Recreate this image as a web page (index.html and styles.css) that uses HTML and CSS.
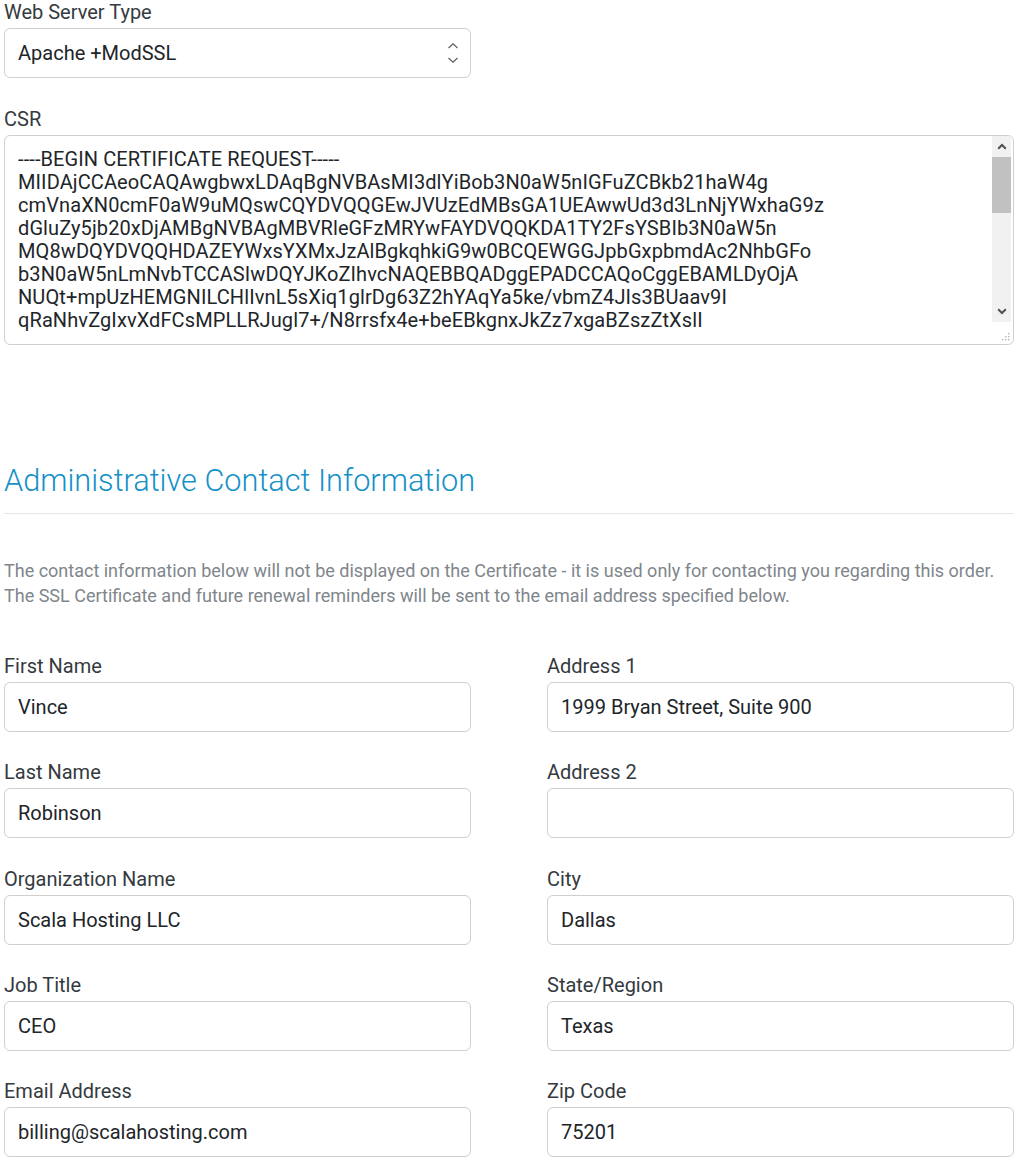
FILE: index.html
```html
<!DOCTYPE html>
<html lang="en">
<head>
  <meta charset="UTF-8">
  <meta name="viewport" content="width=device-width, initial-scale=1.0">
  <title>SSL Certificate Configuration</title>
  <link rel="stylesheet" href="styles.css">
</head>
<body>
  <div class="page">
    <div class="field">
      <label for="serverType">Web Server Type</label>
      <div class="select-wrap">
        <select id="serverType" class="form-control">
          <option>Apache +ModSSL</option>
          <option>Nginx</option>
          <option>Microsoft IIS</option>
          <option>Other</option>
        </select>
        <svg class="select-arrows" width="12" height="26" viewBox="0 0 12 26" aria-hidden="true">
          <path d="M1.5 8 L6 3.8 L10.5 8" fill="none" stroke="#5a5a5a" stroke-width="1.1"/>
          <path d="M1.5 18 L6 22.2 L10.5 18" fill="none" stroke="#5a5a5a" stroke-width="1.1"/>
        </svg>
      </div>
    </div>

    <div class="field">
      <label for="csr">CSR</label>
      <div class="csr-box">
        <textarea id="csr" class="csr" spellcheck="false">----BEGIN CERTIFICATE REQUEST-----
MIIDAjCCAeoCAQAwgbwxLDAqBgNVBAsMI3dlYiBob3N0aW5nIGFuZCBkb21haW4g
cmVnaXN0cmF0aW9uMQswCQYDVQQGEwJVUzEdMBsGA1UEAwwUd3d3LnNjYWxhaG9z
dGluZy5jb20xDjAMBgNVBAgMBVRleGFzMRYwFAYDVQQKDA1TY2FsYSBIb3N0aW5n
MQ8wDQYDVQQHDAZEYWxsYXMxJzAlBgkqhkiG9w0BCQEWGGJpbGxpbmdAc2NhbGFo
b3N0aW5nLmNvbTCCASIwDQYJKoZIhvcNAQEBBQADggEPADCCAQoCggEBAMLDyOjA
NUQt+mpUzHEMGNILCHlIvnL5sXiq1glrDg63Z2hYAqYa5ke/vbmZ4JIs3BUaav9I
qRaNhvZgIxvXdFCsMPLLRJugl7+/N8rrsfx4e+beEBkgnxJkZz7xgaBZszZtXslI
k2Fq0wZl8Tt2Hr6Vb1gM7oXpQe3nC4aUdYs9KfWj5LrGhT0iNmBc8vEz7yPxqAuS
Dm4W+ZtJb2cQh1sRkL9oE3fVa6iGnY0pXwUq7TdCj5MlHe8zKrBv2NsgPyOa4tFi
bX0Qn3LwRc7Jd1mUeHk9tGsVzA6yPqE2oFiWx8KlNrY4jDMuSgbT5vCh0aZpIeQO
AgMBAAGgADANBgkqhkiG9w0BAQsFAAOCAQEAa9Fz3kLr7xYmP2dQvBn8sHtC1eWo
Uj6NgKx0cIpR5vTqLb4ZmEyA9sDhG2fWnJo8Xt3iVkQ7uCaeYr1PbMlN6gHsO4Fd
Zq2wEvTy5KcRn0jLx8bUa3mDhIpG7oSf1WtNe9YqCkBv6rXlJ4ZsMdAg2uHiP0Ty
cF5oNb8QeLm3VkRw1jDt7GaXsZy4HnUp9iMqKv2fOC6lbEgTr0dWxJ8hSaNo5YIz
tP7mQ1uVcRk3LeZb9HgXs4AnJwDf6yOiK2qMlT8pGv0rEoBhNa5CjUdWx1Sz7Yfm
-----END CERTIFICATE REQUEST-----</textarea>
        <div class="scrollbar" aria-hidden="true">
          <span class="sb-btn">
            <svg width="10" height="7" viewBox="0 0 10 7"><path d="M1.2 5.8 L5 2 L8.8 5.8" fill="none" stroke="#505050" stroke-width="2"/></svg>
          </span>
          <span class="sb-track"><span class="sb-thumb"></span></span>
          <span class="sb-btn">
            <svg width="10" height="7" viewBox="0 0 10 7"><path d="M1.2 1.2 L5 5 L8.8 1.2" fill="none" stroke="#505050" stroke-width="2"/></svg>
          </span>
        </div>
        <svg class="grip" width="9" height="9" viewBox="0 0 9 9" aria-hidden="true">
          <rect x="7" y="1" width="1.4" height="1.4" fill="#b5b5b5"/>
          <rect x="4" y="4" width="1.4" height="1.4" fill="#b5b5b5"/>
          <rect x="7" y="4" width="1.4" height="1.4" fill="#b5b5b5"/>
          <rect x="1" y="7" width="1.4" height="1.4" fill="#b5b5b5"/>
          <rect x="4" y="7" width="1.4" height="1.4" fill="#b5b5b5"/>
          <rect x="7" y="7" width="1.4" height="1.4" fill="#b5b5b5"/>
        </svg>
      </div>
    </div>

    <h2 class="section-title">Administrative Contact Information</h2>
    <p class="section-note">
      The contact information below will not be displayed on the Certificate - it is used only for contacting you regarding this order.<br>
      The SSL Certificate and future renewal reminders will be sent to the email address specified below.
    </p>

    <div class="contact-grid">
      <div class="field">
        <label for="firstName">First Name</label>
        <input id="firstName" class="form-control" type="text" value="Vince">
      </div>
      <div class="field">
        <label for="address1">Address 1</label>
        <input id="address1" class="form-control" type="text" value="1999 Bryan Street, Suite 900">
      </div>
      <div class="field">
        <label for="lastName">Last Name</label>
        <input id="lastName" class="form-control" type="text" value="Robinson">
      </div>
      <div class="field">
        <label for="address2">Address 2</label>
        <input id="address2" class="form-control" type="text" value="">
      </div>
      <div class="field">
        <label for="orgName">Organization Name</label>
        <input id="orgName" class="form-control" type="text" value="Scala Hosting LLC">
      </div>
      <div class="field">
        <label for="city">City</label>
        <input id="city" class="form-control" type="text" value="Dallas">
      </div>
      <div class="field">
        <label for="jobTitle">Job Title</label>
        <input id="jobTitle" class="form-control" type="text" value="CEO">
      </div>
      <div class="field">
        <label for="state">State/Region</label>
        <input id="state" class="form-control" type="text" value="Texas">
      </div>
      <div class="field">
        <label for="email">Email Address</label>
        <input id="email" class="form-control" type="text" value="billing@scalahosting.com">
      </div>
      <div class="field">
        <label for="zip">Zip Code</label>
        <input id="zip" class="form-control" type="text" value="75201">
      </div>
    </div>
  </div>
</body>
</html>
```

FILE: styles.css
```css
body {
  margin: 0;
  background-color: #ffffff;
  font-family: 'Roboto', 'Liberation Sans', sans-serif;
  color: #343a40;
}

.page {
  width: 1010px;
  padding: 1px 0 0 4px;
}

.field {
  display: flex;
  flex-direction: column;
  margin-bottom: 30px;
}

.field label {
  font-size: 20px;
  line-height: 22px;
  margin-bottom: 5px;
  color: #343a40;
}

.form-control {
  box-sizing: border-box;
  width: 100%;
  height: 50px;
  padding: 0 13px;
  border: 1px solid #cfcfcf;
  border-radius: 6px;
  background-color: #fff;
  color: #212529;
  font-family: 'Roboto', 'Liberation Sans', sans-serif;
  font-size: 20px;
  outline: none;
}

/* select */
.select-wrap {
  position: relative;
  width: 467px;
}

.select-wrap select {
  appearance: none;
  -webkit-appearance: none;
  padding-right: 40px;
}

.select-arrows {
  position: absolute;
  right: 12px;
  top: 12px;
  pointer-events: none;
}

/* CSR box with its scrollbar */
.csr-box {
  position: relative;
  box-sizing: border-box;
  height: 210px;
  padding: 12px 0 12px 13px;
  border: 1px solid #cfcfcf;
  border-radius: 6px;
  background-color: #fff;
}

.csr {
  display: block;
  width: calc(100% - 30px);
  height: 184px;
  margin: 0;
  padding: 0;
  border: none;
  outline: none;
  resize: none;
  overflow: hidden;
  color: #212529;
  font-family: 'Roboto', 'Liberation Sans', sans-serif;
  font-size: 20px;
  line-height: 23px;
  letter-spacing: 0.1px;
  white-space: pre-wrap;
}

.scrollbar {
  position: absolute;
  top: 0;
  right: 2px;
  bottom: 22px;
  width: 19px;
  display: flex;
  flex-direction: column;
  background-color: #f1f1f1;
}

.sb-btn {
  height: 21px;
  display: flex;
  align-items: center;
  justify-content: center;
}

.sb-track {
  flex: 1;
}

.sb-thumb {
  display: block;
  height: 56px;
  background-color: #c1c1c1;
}

.grip {
  position: absolute;
  right: 3px;
  bottom: 3px;
}

.section-title {
  margin: 118px 0 0;
  padding-bottom: 14px;
  border-bottom: 1px solid #e6e6e6;
  font-size: 30.7px;
  line-height: 36px;
  font-weight: 300;
  color: #1591c8;
}

.section-note {
  margin: 44px 0 47px;
  font-size: 18px;
  line-height: 25px;
  color: #80868b;
}

.contact-grid {
  display: grid;
  grid-template-columns: 467px 467px;
  column-gap: 76px;
}

.contact-grid .field {
  margin-bottom: 29.25px;
}
```
